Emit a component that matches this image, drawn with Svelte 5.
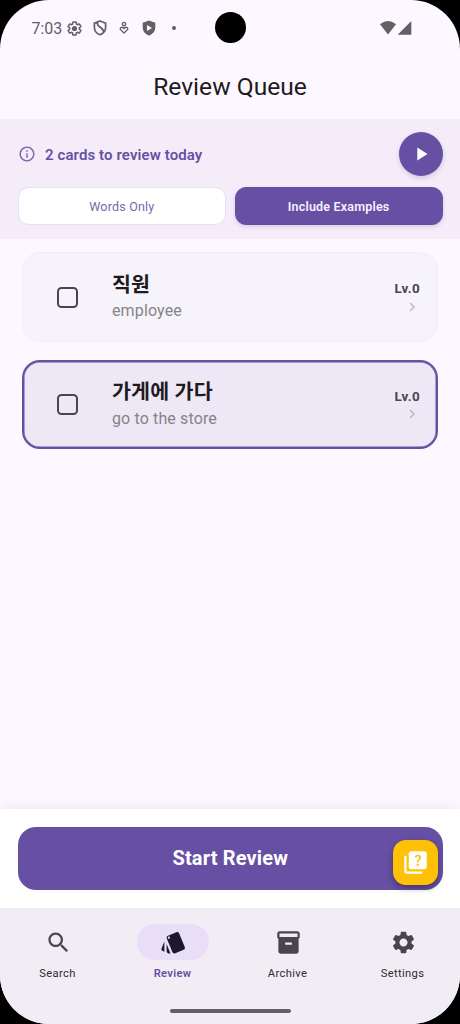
<script>
    const GEAR = 'M19.14 12.94c.04-.3.06-.61.06-.94 0-.32-.02-.64-.07-.94l2.03-1.58c.18-.14.23-.41.12-.61l-1.92-3.32c-.12-.22-.37-.29-.59-.22l-2.39.96c-.5-.38-1.03-.7-1.62-.94l-.36-2.54c-.04-.24-.24-.41-.48-.41h-3.84c-.24 0-.43.17-.47.41l-.36 2.54c-.59.24-1.13.57-1.62.94l-2.39-.96c-.22-.08-.47 0-.59.22L2.74 8.87c-.12.21-.08.47.12.61l2.03 1.58c-.05.3-.09.63-.09.94s.02.64.07.94l-2.03 1.58c-.18.14-.23.41-.12.61l1.92 3.32c.12.22.37.29.59.22l2.39-.96c.5.38 1.03.7 1.62.94l.36 2.54c.05.24.24.41.48.41h3.84c.24 0 .44-.17.47-.41l.36-2.54c.59-.24 1.13-.56 1.62-.94l2.39.96c.22.08.47 0 .59-.22l1.92-3.32c.12-.22.07-.47-.12-.61l-2.01-1.58zM12 15.6c-1.98 0-3.6-1.62-3.6-3.6s1.62-3.6 3.6-3.6 3.6 1.62 3.6 3.6-1.62 3.6-3.6 3.6z';
    const GEAR_RIM = GEAR.slice(0, GEAR.indexOf('M12 15.6'));

    const tabs = [
        { name: 'Search', icon: 'M15.5 14h-.79l-.28-.27C15.41 12.59 16 11.11 16 9.5 16 5.91 13.09 3 9.5 3S3 5.91 3 9.5 5.91 16 9.5 16c1.61 0 3.09-.59 4.23-1.57l.27.28v.79l5 4.99L20.49 19l-4.99-5zm-6 0C7.01 14 5 11.99 5 9.5S7.01 5 9.5 5 14 7.01 14 9.5 11.99 14 9.5 14z' },
        { name: 'Review', icon: 'M2.53 19.65l1.34.56v-9.03l-2.43 5.86c-.41 1.02.08 2.19 1.09 2.61zm19.5-3.7L17.07 3.98c-.31-.75-1.04-1.21-1.81-1.23-.26 0-.53.04-.79.15L7.1 5.95c-.75.31-1.21 1.03-1.23 1.8-.01.27.04.54.15.8l4.96 11.97c.31.76 1.05 1.22 1.83 1.23.26 0 .52-.05.77-.15l7.36-3.05c1.02-.42 1.51-1.59 1.09-2.6zM7.88 8.75c-.55 0-1-.45-1-1s.45-1 1-1 1 .45 1 1-.45 1-1 1zm-2 11c0 1.1.9 2 2 2h1.45l-3.45-8.34v6.34z' },
        { name: 'Archive', icon: 'M20 2H4c-1 0-2 .9-2 2v3.01c0 .72.43 1.34 1 1.69V20c0 1.1 1.1 2 2 2h14c.9 0 2-.9 2-2V8.7c.57-.35 1-.97 1-1.69V4c0-1.1-1-2-2-2zm-5 12H9v-2h6v2zm5-7H4V4h16v3z' },
        { name: 'Settings', icon: GEAR }
    ];

    const cards = [
        { word: '직원', meaning: 'employee', level: 0, example: false },
        { word: '가게에 가다', meaning: 'go to the store', level: 0, example: true }
    ];

    let activeTab = 'Review';
    let includeExamples = true;
    let checked = [];

    $: visible = includeExamples ? cards : cards.filter(c => !c.example);

    function toggle(word) {
        checked = checked.includes(word) ? checked.filter(w => w !== word) : [...checked, word];
    }
</script>

<div class="phone">
    <header>
        <div class="status">
            <span class="time">7:03</span>
            <svg class="s-gear" viewBox="1 1 22 22"><path d={GEAR_RIM} fill="none" stroke="currentColor" stroke-width="2.2" /><circle cx="12" cy="12" r="3.8" fill="currentColor" /></svg>
            <svg class="s-shield" viewBox="0 0 14 16"><path d="M7 1l5.6 2.1v4.4c0 3.3-2.2 6-5.6 7.3-3.4-1.3-5.6-4-5.6-7.3V3.1zM4.2 2.200c-.4 5.400 6.800 5.200 6.600 10.200" fill="none" stroke="currentColor" stroke-width="1.7" /></svg>
            <svg class="s-care" viewBox="0 0 10 14"><circle cx="5" cy="3" r="1.7" /><path d="M5 12L1.7 8.9C.1 7.2 2.7 4.9 5 7.5 7.3 4.9 9.9 7.2 8.3 8.9z" /></svg>
            <svg class="s-play" viewBox="0 0 14 16"><path d="M7 .4l6.3 2.4v4.7c0 3.7-2.5 6.7-6.3 8C3.2 14.2.7 11.2.7 7.5V2.8zM5 4.9v6l5-3z" fill="currentColor" fill-rule="evenodd" /></svg>
            <i class="dot"></i>
            <svg class="s-net" viewBox="0 0 34 16"><path d="M1 4.2Q9 -2.2 17 4.2L9 14.5zM18.7 14.8H32.3V1z" fill="currentColor" /></svg>
            <i class="camera"></i>
        </div>
        <h1>Review Queue</h1>
    </header>

    <section class="banner">
        <div class="summary">
            <svg class="info" viewBox="0 0 24 24"><path d="M11 7h2v2h-2zm0 4h2v6h-2zm1-9C6.48 2 2 6.48 2 12s4.48 10 10 10 10-4.48 10-10S17.52 2 12 2zm0 18c-4.41 0-8-3.59-8-8s3.59-8 8-8 8 3.59 8 8-3.59 8-8 8z" /></svg>
            <span>{cards.length} cards to review today</span>
            <button class="play" aria-label="Play">
                <svg viewBox="0 0 24 24"><path d="M8 5v14l11-7z" /></svg>
            </button>
        </div>
        <div class="filters">
            <button class:selected={!includeExamples} on:click={() => includeExamples = false}>Words Only</button>
            <button class:selected={includeExamples} on:click={() => includeExamples = true}>Include Examples</button>
        </div>
    </section>

    <main>
        {#each visible as card}
            <article class="card" class:example={card.example}>
                <button class="check" class:on={checked.includes(card.word)} aria-label={card.word} on:click={() => toggle(card.word)}></button>
                <div class="text">
                    <h2 lang="ko">{card.word}</h2>
                    <p>{card.meaning}</p>
                </div>
                <div class="level">
                    <b>Lv.{card.level}</b>
                    <svg viewBox="0 0 8 10"><path d="M2 1l4 4-4 4" /></svg>
                </div>
            </article>
        {/each}
    </main>

    <div class="action">
        <button class="start">Start Review</button>
        <button class="fab" aria-label="Quiz">
            <svg viewBox="0 0 24 24"><path d="M4 6H2v14c0 1.1.9 2 2 2h14v-2H4V6zM20 2H8c-1.1 0-2 .9-2 2v12c0 1.1.9 2 2 2h12c1.1 0 2-.9 2-2V4c0-1.1-.9-2-2-2zm-5.99 13c-.59 0-1.05-.47-1.05-1.05 0-.59.47-1.04 1.05-1.04.59 0 1.04.45 1.04 1.04-.01.58-.45 1.05-1.04 1.05zm2.5-6.17c-.63.93-1.23 1.21-1.56 1.81-.13.24-.18.4-.18 1.18h-1.52c0-.41-.06-1.08.26-1.65.41-.73 1.18-1.16 1.63-1.8.48-.68.21-1.94-1.14-1.94-.88 0-1.32.67-1.5 1.23l-1.37-.57C11.51 5.96 12.52 5 13.99 5c1.23 0 2.08.56 2.51 1.26.37.61.58 1.73.01 2.57z" /></svg>
        </button>
    </div>

    <nav>
        <div class="tabs">
            {#each tabs as tab}
                <button class="tab" class:active={activeTab === tab.name} on:click={() => activeTab = tab.name}>
                    <span class="pill"><svg viewBox="0 0 24 24"><path d={tab.icon} /></svg></span>
                    <span class="label">{tab.name}</span>
                </button>
            {/each}
        </div>
        <i class="handle"></i>
    </nav>
</div>

<style>
:global(body) {
    background: #000;
}
.phone {
    --accent: #6750a4;
    width: 460px;
    height: 1024px;
    display: flex;
    flex-direction: column;
    overflow: hidden;
    border-radius: 49px;
    background: #fdf8ff;
    color: #1d1b20;
    font-family: Roboto, "Noto Sans CJK KR", sans-serif;
}
.phone * {
    box-sizing: border-box;
}
button {
    border: 0;
    padding: 0;
    background: none;
    font-family: inherit;
    cursor: pointer;
}
svg {
    display: block;
    flex: none;
}
header {
    height: 119px;
}
.status {
    position: relative;
    height: 56px;
    padding: 0 47px 0 31.5px;
    display: flex;
    align-items: center;
    color: #626064;
}
.time {
    width: 35.5px;
    font-size: 16px;
}
.s-gear {
    width: 15px;
    height: 15px;
}
.s-shield {
    width: 14px;
    height: 16px;
    margin-left: 11px;
}
.s-care {
    width: 10px;
    height: 14px;
    margin-left: 12px;
    fill: none;
    stroke: currentColor;
    stroke-width: 1.3;
}
.s-play {
    width: 14px;
    height: 16px;
    margin-left: 13px;
}
.dot {
    width: 4px;
    height: 4px;
    margin-left: 15.5px;
    border-radius: 50%;
    background: currentColor;
}
.s-net {
    width: 34px;
    height: 16px;
    margin-left: auto;
}
.camera {
    position: absolute;
    left: 214.5px;
    top: 12px;
    width: 31px;
    height: 31px;
    border-radius: 50%;
    background: #000;
}
h1 {
    margin: 0;
    text-align: center;
    font-size: 24.6px;
    font-weight: 400;
    line-height: 62px;
}
.banner {
    height: 120px;
    padding: 13px 17.5px 0 18px;
    background: #f4edf9;
}
.summary {
    display: flex;
    align-items: center;
    height: 44px;
    color: var(--accent);
    font-size: 15px;
    font-weight: 600;
    letter-spacing: .1px;
}
.summary span {
    padding-top: 1px;
}
.info {
    width: 18px;
    height: 18px;
    margin-right: 9px;
    fill: #8069b4;
}
.play {
    width: 44px;
    height: 44px;
    margin-left: auto;
    border-radius: 50%;
    display: grid;
    place-items: center;
    background: var(--accent);
    box-shadow: 0 2px 5px rgba(103, 80, 164, .25);
}
.play svg {
    width: 22px;
    height: 22px;
    fill: #fff;
}
.filters {
    display: flex;
    gap: 9px;
    margin-top: 11px;
}
.filters button {
    flex: 1;
    height: 38px;
    border-radius: 11px;
    border: 1px solid #e6e0f0;
    background: #fff;
    color: #7b66b0;
    font-size: 12.5px;
    letter-spacing: .2px;
}
.filters .selected {
    border-color: var(--accent);
    background: var(--accent);
    color: #f6f2fc;
    font-weight: 600;
    box-shadow: 0 2px 4px rgba(103, 80, 164, .2);
}
main {
    flex: 1;
    padding: 13px 22px 0;
    display: flex;
    flex-direction: column;
    gap: 18px;
}
.card {
    display: flex;
    align-items: center;
    height: 89.5px;
    padding: 0 17px 0 34px;
    border: 1px solid #f1eff3;
    border-radius: 18px;
    background: #f7f3fa;
}
.card.example {
    padding: 0 16px 0 33px;
    border: 2px solid var(--accent);
    box-shadow: inset 0 0 0 .5px var(--accent);
    background: #eee8f6;
}
.check {
    width: 21px;
    height: 21px;
    margin-top: 1px;
    border: 2px solid #49454f;
    border-radius: 4.5px;
}
.check.on {
    background: var(--accent);
}
.text {
    flex: 1;
    margin-left: 34px;
}
h2 {
    margin: 0;
    font-size: 20.6px;
    font-weight: 700;
    line-height: 28px;
    letter-spacing: .15px;
}
.text p {
    margin: 0;
    color: #858388;
    font-size: 16px;
    letter-spacing: .13px;
    line-height: 24px;
}
.example .text p {
    margin-top: 1px;
}
.level {
    display: flex;
    flex-direction: column;
    align-items: flex-end;
    color: #49454f;
    padding-bottom: .8px;
}
.level b {
    font-size: 13.4px;
    line-height: 16px;
    letter-spacing: .4px;
}
.level svg {
    width: 8px;
    height: 10px;
    margin: 4.5px 4.5px 0 0;
    fill: none;
    stroke: #bdbbc0;
    stroke-width: 1.6;
}
.action {
    position: relative;
    height: 99px;
    padding: 18px 17.5px 0 18px;
    background: #fff;
    box-shadow: 0 -2px 11px rgba(0, 0, 0, .06);
}
.start {
    width: 100%;
    height: 62.5px;
    border-radius: 18px;
    background: var(--accent);
    color: #fff;
    font-size: 20px;
    font-weight: 700;
    letter-spacing: .15px;
}
.fab {
    position: absolute;
    right: 21.8px;
    top: 31.3px;
    width: 45px;
    height: 45px;
    display: grid;
    place-items: center;
    border-radius: 13px;
    background: #ffc107;
    box-shadow: 0 3px 7px rgba(0, 0, 0, .35);
}
.fab svg {
    width: 27px;
    height: 27px;
    fill: #fff;
}
nav {
    position: relative;
    height: 116px;
    display: flex;
    flex-direction: column;
    align-items: center;
    background: #f2ecf4;
}
.tabs {
    width: 100%;
    display: flex;
    padding-top: 16px;
}
.tab {
    flex: 1;
    display: flex;
    flex-direction: column;
    align-items: center;
    color: #49454f;
}
.pill {
    width: 72px;
    height: 36px;
    padding-left: 1px;
    display: grid;
    place-items: center;
    border-radius: 18px;
}
.pill svg {
    width: 27px;
    height: 27px;
    fill: currentColor;
}
.label {
    margin-top: 6px;
    font-size: 11.2px;
    line-height: 16px;
    letter-spacing: .35px;
    color: #2e2c31;
}
.active {
    color: #1d192b;
}
.active .pill {
    background: #e8def8;
}
.active .label {
    color: var(--accent);
    font-weight: 600;
    letter-spacing: .3px;
}
.handle {
    width: 121px;
    height: 4.5px;
    margin-top: auto;
    margin-bottom: 11px;
    border-radius: 3px;
    background: #626064;
}
</style>
